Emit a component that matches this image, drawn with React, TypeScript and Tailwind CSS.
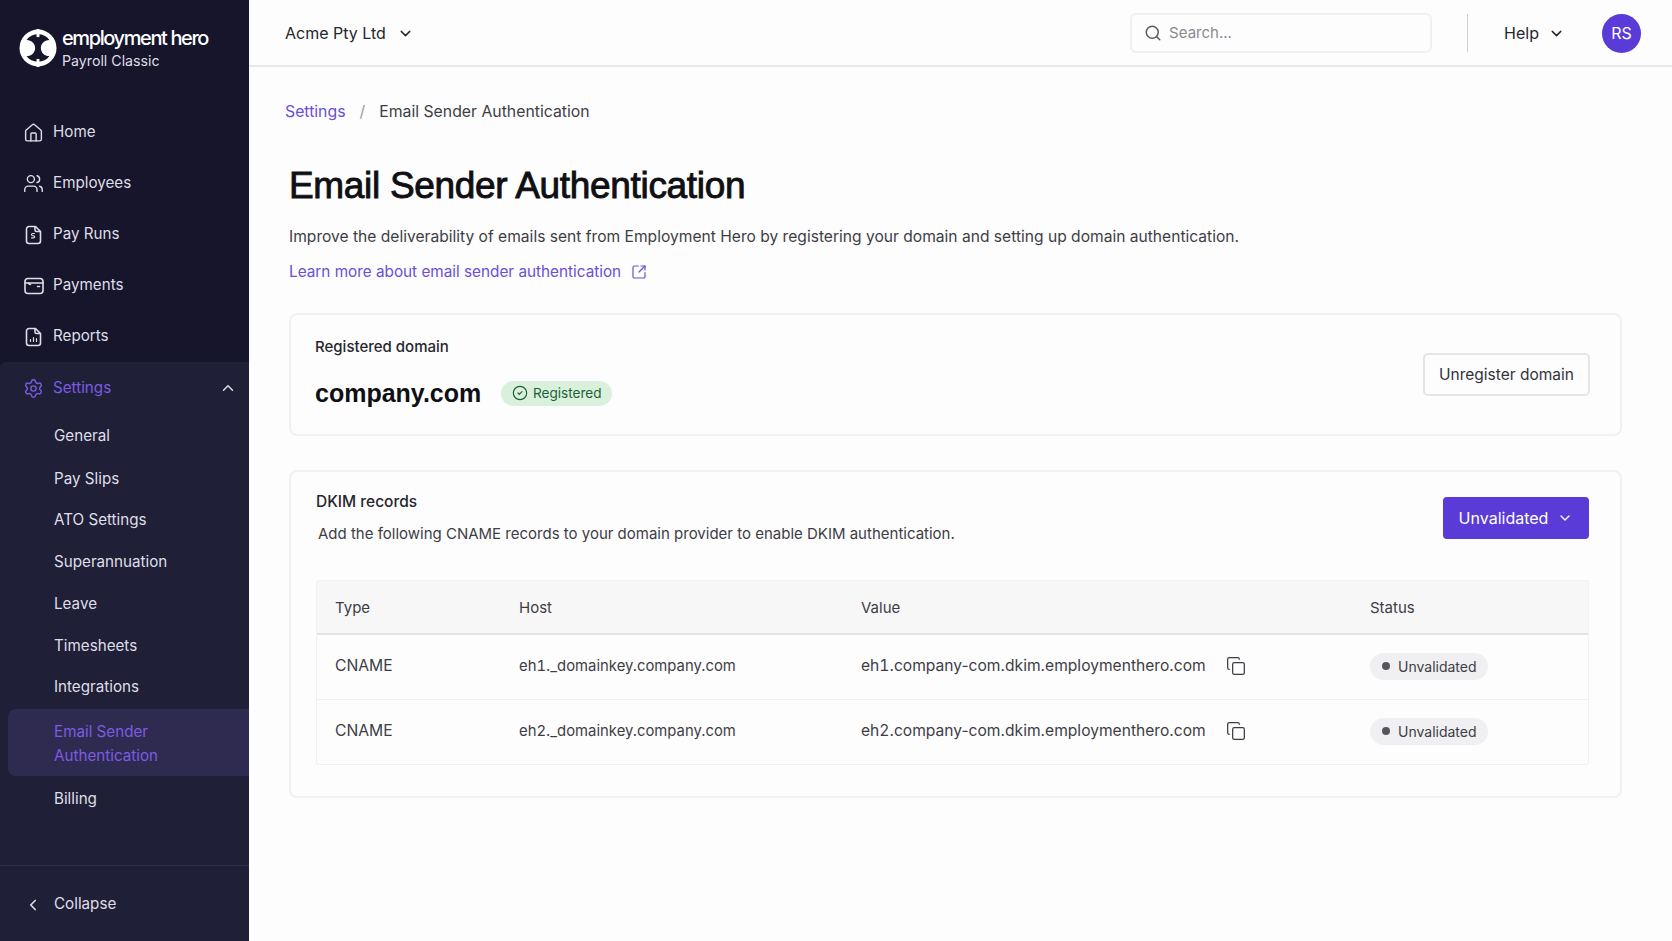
import { ChevronDown, ChevronLeft, ChevronUp, CircleCheck, Copy, House, Search, Settings, SquareArrowOutUpRight, Users } from "lucide-react";

const inter = "font-['Inter',sans-serif]";

function LogoMark() {
  return (
    <svg viewBox="0 0 40 40" className="w-[38px] h-[38px] shrink-0">
      <circle cx="20" cy="20" r="19.5" fill="#fff" />
      <path d="M8 11.5 C10.5 7.5 15 5.5 20 5.5 C25 5.5 29.5 7.5 32 11.5 C26.5 11.5 23 15.5 23 20 C23 24.5 26.5 28.5 32 28.5 C29.5 32.5 25 34.5 20 34.5 C15 34.5 10.5 32.5 8 28.5 C13.5 28.5 17 24.5 17 20 C17 15.5 13.5 11.5 8 11.5 Z" fill="#16152b" />
      <rect x="18.5" y="0" width="3" height="8.5" fill="#fff" />
      <rect x="18.5" y="31.5" width="3" height="8.5" fill="#fff" />
    </svg>
  );
}

function PayRunIcon() {
  return (
    <svg viewBox="0 0 20 20" fill="none" stroke="currentColor" strokeWidth="1.6" strokeLinecap="round" strokeLinejoin="round" className="w-[20px] h-[20px]">
      <path d="M5 1.5h6.5l5 5V16a2.5 2.5 0 0 1-2.5 2.5H5A2.5 2.5 0 0 1 2.5 16V4A2.5 2.5 0 0 1 5 1.5Z" />
      <path d="M11 1.8V5a1.5 1.5 0 0 0 1.5 1.5h3.7" />
      <path d="M10.5 8.5H8.6a1 1 0 0 0 0 2.2h1a1 1 0 0 1 0 2.2H7.5" strokeWidth="1.1" />
    </svg>
  );
}

function WalletIcon() {
  return (
    <svg viewBox="0 0 20 20" fill="none" stroke="currentColor" strokeWidth="1.6" strokeLinecap="round" strokeLinejoin="round" className="w-[20px] h-[20px]">
      <rect x="1" y="2.5" width="18" height="15" rx="3" />
      <path d="M1 7h18" />
      <path d="M4.5 7c.3 1 1 1.5 2 1.5M13.5 10.5h2" />
    </svg>
  );
}

function ReportIcon() {
  return (
    <svg viewBox="0 0 20 20" fill="none" stroke="currentColor" strokeWidth="1.6" strokeLinecap="round" strokeLinejoin="round" className="w-[20px] h-[20px]">
      <path d="M5 1.5h6.5l5 5V16a2.5 2.5 0 0 1-2.5 2.5H5A2.5 2.5 0 0 1 2.5 16V4A2.5 2.5 0 0 1 5 1.5Z" />
      <path d="M11 1.8V5a1.5 1.5 0 0 0 1.5 1.5h3.7" />
      <path d="M6.5 14.5v-2M9.5 14.5v-4M12.5 14.5v-3" strokeWidth="1.2" />
    </svg>
  );
}

const mainNav = [
  { label: "Home", icon: <House size={22} strokeWidth={1.6} /> },
  { label: "Employees", icon: <Users size={21} strokeWidth={1.6} /> },
  { label: "Pay Runs", icon: <PayRunIcon /> },
  { label: "Payments", icon: <WalletIcon /> },
  { label: "Reports", icon: <ReportIcon /> },
];

const subNav = ["General", "Pay Slips", "ATO Settings", "Superannuation", "Leave", "Timesheets", "Integrations"];

function Sidebar() {
  return (
    <aside className={`w-[249px] h-[941px] shrink-0 flex flex-col bg-[#16152b] text-[#dfdee6] text-[15.2px] ${inter}`}>
      <div className="h-[107px] pt-[28px] pl-[19px] flex items-start gap-[5px]">
        <div className="mt-[1px]"><LogoMark /></div>
        <div className="flex flex-col -mt-[1px]">
          <span className="text-[20px] leading-[22px] font-medium tracking-[-0.07em] text-white">employment hero</span>
          <span className="text-[14.2px] leading-[23px] text-[#dfdee6]">Payroll Classic</span>
        </div>
      </div>
      <nav className="flex flex-col">
        {mainNav.map((item) => (
          <div key={item.label} className="h-[51px] pl-[23px] flex items-center gap-[9px]">
            <span className="w-[21px] flex justify-center">{item.icon}</span>
            <span>{item.label}</span>
          </div>
        ))}
      </nav>
      <div className="flex-1 flex flex-col bg-[#201f38] rounded-tl-[6px]">
        <div className="h-[52px] pl-[23px] pr-[12px] flex items-center gap-[9px] text-[#7c5ce0]">
          <Settings size={21} strokeWidth={1.6} />
          <span className="flex-1 pt-[1px]">Settings</span>
          <ChevronUp size={18} className="text-[#dfdee6]" />
        </div>
        <div className="flex flex-col pl-[8px]">
          {subNav.map((label, i) => (
            <div key={label} className={`pl-[46px] pt-[2px] flex items-center ${i === 0 ? "h-[43px]" : "h-[41.8px]"}`}>{label}</div>
          ))}
          <div className="mt-[1px] h-[67px] pl-[46px] pt-[4px] rounded-l-[8px] bg-[#2e2a50] text-[#7c5ce0] leading-[24px] flex items-center">
            Email Sender<br />Authentication
          </div>
          <div className="h-[44px] pl-[46px] pt-[4px] flex items-center">Billing</div>
        </div>
        <div className="mt-auto h-[76px] border-t border-[#33324a] pl-[24px] pt-[2px] flex items-center gap-[12px]">
          <ChevronLeft size={18} strokeWidth={2.2} />
          <span>Collapse</span>
        </div>
      </div>
    </aside>
  );
}

function Header() {
  return (
    <header className="h-[67px] shrink-0 border-b-2 border-[#e8e8ea] pl-[36px] pr-[31px] pt-[1px] flex items-center text-[#26262e] text-[16px]">
      <span>Acme Pty Ltd</span>
      <ChevronDown size={17} className="ml-[11px]" />
      <div className="ml-auto w-[302px] h-[40px] rounded-[6px] border-2 border-[#f0f0f2] flex items-center pl-[12px] gap-[7px] text-[#8a8a92] text-[15px]">
        <Search size={18} className="text-[#5c5c64]" />
        <span className="pt-[1px]">Search...</span>
      </div>
      <div className="ml-[35px] w-px h-[38px] bg-[#cfcfd3]" />
      <span className="ml-[36px]">Help</span>
      <ChevronDown size={17} className="ml-[9px]" />
      <div className="ml-[37px] w-[39px] h-[39px] rounded-full bg-[#5a3bd8] text-white flex items-center justify-center">RS</div>
    </header>
  );
}

function Badge() {
  return (
    <span className="h-[25px] w-[111px] rounded-full bg-[#d9f0dc] text-[#1f5f38] text-[13.6px] flex items-center justify-center gap-[5px]">
      <CircleCheck size={16} strokeWidth={1.8} />
      Registered
    </span>
  );
}

const records = ["1", "2"];

function RecordsTable() {
  return (
    <div className="mt-[35px] border border-[#f1f1f3] rounded-[2px] text-[#3d3d46] text-[15px]">
      <div className="h-[54px] pt-[2px] bg-[#f7f7f8] border-b-2 border-[#e3e3e6] grid grid-cols-[184px_342px_509px_1fr] items-center pl-[18px]">
        <span>Type</span>
        <span>Host</span>
        <span>Value</span>
        <span>Status</span>
      </div>
      {records.map((n, i) => (
        <div key={n} className={`grid grid-cols-[184px_342px_509px_1fr] items-center pl-[18px] ${i === 0 ? "h-[65px] border-b border-[#f1f1f3]" : "h-[64px]"}`}>
          <span className="-mt-[2px] text-[15.7px]">CNAME</span>
          <span className="-mt-[2px] text-[14.85px]">eh<span className="tabular-nums">{n}</span>._domainkey.company.com</span>
          <span className="-mt-[2px] flex items-center">
            <span className="text-[15.6px]">eh<span className="tabular-nums">{n}</span>.company-com.dkim.employmenthero.com</span>
            <Copy size={20} strokeWidth={1.5} className="ml-[20px]" />
          </span>
          <span className="-mt-[2px] w-[118px] h-[27px] rounded-full bg-[#f0f0f2] text-[14px] flex items-center pl-[12px] gap-[8px]">
            <span className="w-[8px] h-[8px] rounded-full bg-[#55555e]" />
            Unvalidated
          </span>
        </div>
      ))}
    </div>
  );
}

export default function App() {
  return (
    <div className={`w-[1672px] h-[941px] overflow-hidden flex bg-[#fdfdfd] ${inter}`}>
      <Sidebar />
      <main className="flex-1 min-w-0 flex flex-col">
        <Header />
        <div className="pl-[40px] pr-[50px]">
          <div className="mt-[33px] -ml-[4px] h-[24px] flex items-center text-[15.8px]">
            <span className="text-[#6b4fd8]">Settings</span>
            <span className="mx-[14px] text-[#9a9aa2]">/</span>
            <span className="text-[#3d3d46]">Email Sender Authentication</span>
          </div>
          <h1 className="mt-[38px] font-['Liberation_Sans',sans-serif] font-normal [-webkit-text-stroke:0.9px] text-[37px] leading-[48px] tracking-[-0.32px] text-[#0f0f14]">Email Sender Authentication</h1>
          <p className="mt-[14px] text-[15.6px] leading-[26px] text-[#3d3d46]">Improve the deliverability of emails sent from Employment Hero by registering your domain and setting up domain authentication.</p>
          <a className="mt-[9px] flex items-center gap-[10px] text-[15.3px] leading-[26px] text-[#6b4fd8]">
            Learn more about email sender authentication
            <SquareArrowOutUpRight size={16} strokeWidth={1.8} />
          </a>
          <section className="mt-[28px] h-[123px] border-2 border-[#f1f1f3] rounded-[8px] pl-[24px] pr-[30px] flex items-center justify-between">
            <div className="pb-[2px]">
              <div className="text-[15px] leading-[22px] font-medium text-[#26262e]">Registered domain</div>
              <div className="mt-[17px] flex items-center gap-[20px]">
                <span className="font-['Liberation_Sans',sans-serif] font-bold text-[25px] leading-[36px] text-[#0f0f14]">company.com</span>
                <Badge />
              </div>
            </div>
            <button className="w-[167px] h-[43px] rounded-[5px] border-2 border-[#e5e5e8] text-[15.5px] text-[#33333c]">Unregister domain</button>
          </section>
          <section className="mt-[34px] h-[328px] border-2 border-[#f1f1f3] rounded-[8px] pl-[25px] pr-[31px] pt-[19px]">
            <div className="flex items-start justify-between">
              <div>
                <div className="text-[15.5px] leading-[22px] font-medium text-[#26262e]">DKIM records</div>
                <p className="mt-[10px] ml-[2px] text-[15px] leading-[22px] text-[#3d3d46]">Add the following CNAME records to your domain provider to enable DKIM authentication.</p>
              </div>
              <button className="mt-[6px] w-[146px] h-[42px] rounded-[4px] bg-[#5a3bd8] text-white text-[16px] flex items-center justify-center gap-[9px]">
                Unvalidated
                <ChevronDown size={16} />
              </button>
            </div>
            <RecordsTable />
          </section>
        </div>
      </main>
    </div>
  );
}
